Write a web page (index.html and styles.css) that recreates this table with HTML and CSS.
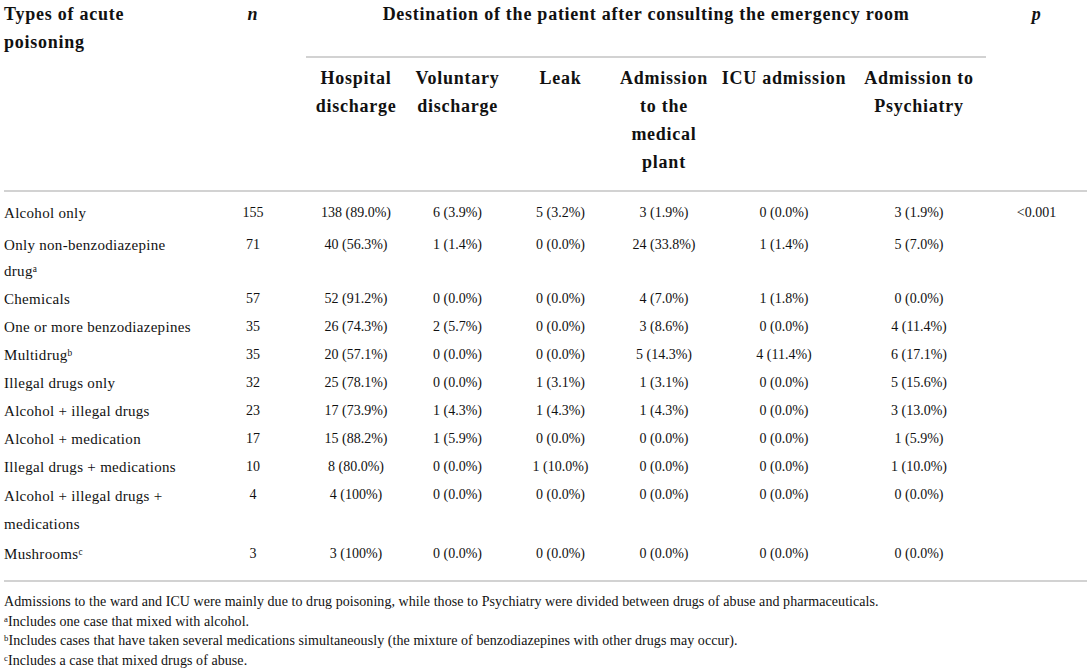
FILE: index.html
```html
<!DOCTYPE html>
<html lang="en">
<head>
<meta charset="utf-8">
<title>Acute poisoning destinations</title>
<link rel="stylesheet" href="styles.css">
</head>
<body>
<div class="wrap">
<table class="tbl">
  <colgroup>
    <col class="c-type"><col class="c-n"><col class="c-hosp"><col class="c-vol"><col class="c-leak"><col class="c-adm"><col class="c-icu"><col class="c-psy"><col class="c-p">
  </colgroup>
  <thead>
    <tr class="h1">
      <th class="left">Types of acute poisoning</th>
      <th><i>n</i></th>
      <th colspan="6" class="dest">Destination of the patient after consulting the emergency room</th>
      <th><i>p</i></th>
    </tr>
    <tr class="h2">
      <th></th>
      <th></th>
      <th>Hospital discharge</th>
      <th>Voluntary discharge</th>
      <th>Leak</th>
      <th>Admission to the medical plant</th>
      <th>ICU admission</th>
      <th>Admission to Psychiatry</th>
      <th></th>
    </tr>
  </thead>
  <tbody>
    <tr><td class="left">Alcohol only</td><td>155</td><td>138 (89.0%)</td><td>6 (3.9%)</td><td>5 (3.2%)</td><td>3 (1.9%)</td><td>0 (0.0%)</td><td>3 (1.9%)</td><td>&lt;0.001</td></tr>
    <tr><td class="left">Only non-benzodiazepine drug<sup>a</sup></td><td>71</td><td>40 (56.3%)</td><td>1 (1.4%)</td><td>0 (0.0%)</td><td>24 (33.8%)</td><td>1 (1.4%)</td><td>5 (7.0%)</td><td></td></tr>
    <tr><td class="left">Chemicals</td><td>57</td><td>52 (91.2%)</td><td>0 (0.0%)</td><td>0 (0.0%)</td><td>4 (7.0%)</td><td>1 (1.8%)</td><td>0 (0.0%)</td><td></td></tr>
    <tr><td class="left">One or more benzodiazepines</td><td>35</td><td>26 (74.3%)</td><td>2 (5.7%)</td><td>0 (0.0%)</td><td>3 (8.6%)</td><td>0 (0.0%)</td><td>4 (11.4%)</td><td></td></tr>
    <tr><td class="left">Multidrug<sup>b</sup></td><td>35</td><td>20 (57.1%)</td><td>0 (0.0%)</td><td>0 (0.0%)</td><td>5 (14.3%)</td><td>4 (11.4%)</td><td>6 (17.1%)</td><td></td></tr>
    <tr><td class="left">Illegal drugs only</td><td>32</td><td>25 (78.1%)</td><td>0 (0.0%)</td><td>1 (3.1%)</td><td>1 (3.1%)</td><td>0 (0.0%)</td><td>5 (15.6%)</td><td></td></tr>
    <tr><td class="left">Alcohol + illegal drugs</td><td>23</td><td>17 (73.9%)</td><td>1 (4.3%)</td><td>1 (4.3%)</td><td>1 (4.3%)</td><td>0 (0.0%)</td><td>3 (13.0%)</td><td></td></tr>
    <tr><td class="left">Alcohol + medication</td><td>17</td><td>15 (88.2%)</td><td>1 (5.9%)</td><td>0 (0.0%)</td><td>0 (0.0%)</td><td>0 (0.0%)</td><td>1 (5.9%)</td><td></td></tr>
    <tr><td class="left">Illegal drugs + medications</td><td>10</td><td>8 (80.0%)</td><td>0 (0.0%)</td><td>1 (10.0%)</td><td>0 (0.0%)</td><td>0 (0.0%)</td><td>1 (10.0%)</td><td></td></tr>
    <tr class="tall"><td class="left">Alcohol + illegal drugs + medications</td><td>4</td><td>4 (100%)</td><td>0 (0.0%)</td><td>0 (0.0%)</td><td>0 (0.0%)</td><td>0 (0.0%)</td><td>0 (0.0%)</td><td></td></tr>
    <tr><td class="left">Mushrooms<sup>c</sup></td><td>3</td><td>3 (100%)</td><td>0 (0.0%)</td><td>0 (0.0%)</td><td>0 (0.0%)</td><td>0 (0.0%)</td><td>0 (0.0%)</td><td></td></tr>
  </tbody>
</table>
<div class="notes">
  <p>Admissions to the ward and ICU were mainly due to drug poisoning, while those to Psychiatry were divided between drugs of abuse and pharmaceuticals.</p>
  <p><sup>a</sup>Includes one case that mixed with alcohol.</p>
  <p><sup>b</sup>Includes cases that have taken several medications simultaneously (the mixture of benzodiazepines with other drugs may occur).</p>
  <p><sup>c</sup>Includes a case that mixed drugs of abuse.</p>
</div>
</div>
</body>
</html>
```
FILE: styles.css
```css
html, body {
  margin: 0;
  padding: 0;
  background: #ffffff;
}
body {
  font-family: "Liberation Serif", "Times New Roman", serif;
  color: #111111;
}
.wrap {
  padding: 0 4px;
}
.tbl {
  width: 1083px;
  table-layout: fixed;
  border-collapse: collapse;
}
.c-type { width: 196px; }
.c-n { width: 106px; }
.c-hosp { width: 100px; }
.c-vol { width: 103px; }
.c-leak { width: 103px; }
.c-adm { width: 104px; }
.c-icu { width: 136px; }
.c-psy { width: 134px; }
.c-p { width: 101px; }

.tbl th {
  font-weight: bold;
  font-size: 18px;
  letter-spacing: 0.75px;
  line-height: 28px;
  vertical-align: top;
  text-align: center;
  padding: 0 4px;
}
.tbl th i {
  font-style: italic;
}
.tbl .left {
  text-align: left;
  padding-left: 0;
}
.h1 th {
  padding-bottom: 1px;
}
.h1 .dest {
  border-bottom: 2px solid #d2d2d2;
}
.h2 th {
  padding-top: 6px;
  padding-bottom: 14px;
  border-bottom: 2px solid #d2d2d2;
}
.tbl td {
  font-size: 14px;
  line-height: 26px;
  padding: 1px 4px;
  text-align: center;
  vertical-align: top;
}
.tbl td.left {
  font-size: 15px;
  letter-spacing: 0.3px;
  text-align: left;
  padding-left: 0;
  padding-right: 6px;
}
.tbl tr.tall td.left {
  line-height: 28px;
}
.tbl tbody tr:first-child td {
  padding-top: 8px;
  padding-bottom: 4px;
}
.tbl tbody tr:first-child + tr td {
  padding-top: 2px;
}
.tbl tbody tr:last-child td {
  padding-top: 2px;
  padding-bottom: 13px;
  border-bottom: 2px solid #d2d2d2;
}
sup {
  font-size: 0.62em;
  line-height: 0;
  vertical-align: 0.45em;
}
.notes {
  padding-top: 10px;
}
.notes p {
  margin: 0;
  font-size: 14px;
  letter-spacing: 0.07px;
  line-height: 19.5px;
}
```
